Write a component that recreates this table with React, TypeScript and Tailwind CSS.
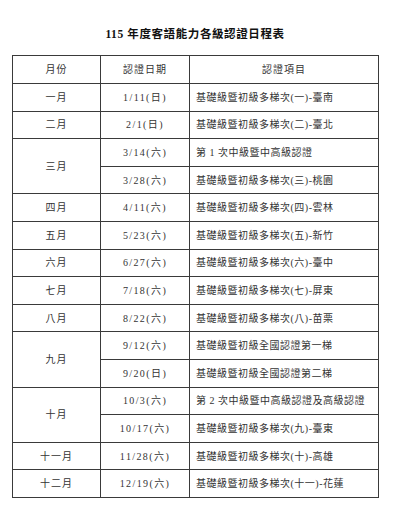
import React from "react";

type Row = { month?: string; span?: number; date: string; item: string };

const rows: Row[] = [
  { month: "一月", span: 1, date: "1/11(日)", item: "基礎級暨初級多梯次(一)-臺南" },
  { month: "二月", span: 1, date: "2/1(日)", item: "基礎級暨初級多梯次(二)-臺北" },
  { month: "三月", span: 2, date: "3/14(六)", item: "第 1 次中級暨中高級認證" },
  { date: "3/28(六)", item: "基礎級暨初級多梯次(三)-桃園" },
  { month: "四月", span: 1, date: "4/11(六)", item: "基礎級暨初級多梯次(四)-雲林" },
  { month: "五月", span: 1, date: "5/23(六)", item: "基礎級暨初級多梯次(五)-新竹" },
  { month: "六月", span: 1, date: "6/27(六)", item: "基礎級暨初級多梯次(六)-臺中" },
  { month: "七月", span: 1, date: "7/18(六)", item: "基礎級暨初級多梯次(七)-屏東" },
  { month: "八月", span: 1, date: "8/22(六)", item: "基礎級暨初級多梯次(八)-苗栗" },
  { month: "九月", span: 2, date: "9/12(六)", item: "基礎級暨初級全國認證第一梯" },
  { date: "9/20(日)", item: "基礎級暨初級全國認證第二梯" },
  { month: "十月", span: 2, date: "10/3(六)", item: "第 2 次中級暨中高級認證及高級認證" },
  { date: "10/17(六)", item: "基礎級暨初級多梯次(九)-臺東" },
  { month: "十一月", span: 1, date: "11/28(六)", item: "基礎級暨初級多梯次(十)-高雄" },
  { month: "十二月", span: 1, date: "12/19(六)", item: "基礎級暨初級多梯次(十一)-花蓮" },
];

export default function App() {
  return (
    <div
      className="w-[400px] h-[526px] bg-white text-[#333] overflow-hidden"
      style={{ fontFamily: '"Liberation Serif", "Noto Sans CJK TC", serif' }}
    >
      <div className="px-[12px] w-[390px]">
        <h1 className="pt-[27px] text-center text-[11.5px] leading-[14px] font-bold text-[#111] tracking-[0.6px]">
          115 年度客語能力各級認證日程表
        </h1>
        <table className="mt-[14px] w-[366px] border-collapse table-fixed text-[10px]">
          <colgroup>
            <col className="w-[88px]" />
            <col className="w-[89px]" />
            <col className="w-[189px]" />
          </colgroup>
          <thead>
            <tr className="h-[28px]">
              <th className="border border-[#3a3a3a] font-normal text-center p-0 tracking-[1px]">月份</th>
              <th className="border border-[#3a3a3a] font-normal text-center p-0 tracking-[1px]">認證日期</th>
              <th className="border border-[#3a3a3a] font-normal text-center p-0 tracking-[1px]">認證項目</th>
            </tr>
          </thead>
          <tbody>
            {rows.map((r, i) => (
              <tr key={i} className="h-[27.6px]">
                {r.month && (
                  <td rowSpan={r.span} className="border border-[#3a3a3a] text-center p-0 tracking-[1px]">
                    {r.month}
                  </td>
                )}
                <td className="border border-[#3a3a3a] text-center p-0 tracking-[1.4px]">{r.date}</td>
                <td className="border border-[#3a3a3a] text-left pl-[6px] p-0 whitespace-nowrap tracking-[0.5px]">
                  {r.item}
                </td>
              </tr>
            ))}
          </tbody>
        </table>
      </div>
    </div>
  );
}
